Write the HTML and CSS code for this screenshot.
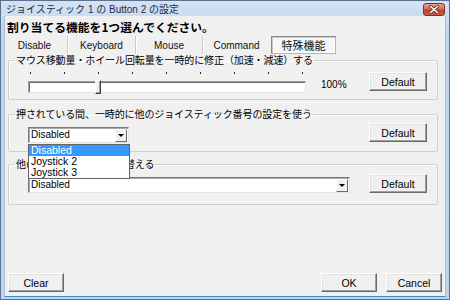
FILE: index.html
```html
<!DOCTYPE html>
<html lang="ja">
<head>
<meta charset="utf-8">
<title>ジョイスティック 1 の Button 2 の設定</title>
<link rel="stylesheet" href="styles.css">
</head>
<body>
<div class="window">
  <div class="titlebar">
    <span class="title">ジョイスティック 1 の Button 2 の設定</span>
    <span class="close"><svg width="12" height="9" viewBox="0 0 12 9"><path d="M2.5 1.5 L9.5 7.5 M9.5 1.5 L2.5 7.5" stroke="#7a2a20" stroke-width="3.2" stroke-linecap="round"/><path d="M2.5 1.5 L9.5 7.5 M9.5 1.5 L2.5 7.5" stroke="#fff" stroke-width="1.6" stroke-linecap="round"/></svg></span>
  </div>
  <div class="client">
    <div class="heading">割り当てる機能を1つ選んでください。</div>
    <div class="tabs">
      <span class="tab t1">Disable</span>
      <span class="tab t2">Keyboard</span>
      <span class="tab t3">Mouse</span>
      <span class="tab t4">Command</span>
      <span class="tab sel">特殊機能</span>
    </div>

    <fieldset class="group g1">
      <legend>マウス移動量・ホイール回転量を一時的に修正（加速・減速）する</legend>
      <div class="row">
        <div class="slider">
          <div class="ticks"><i></i><i></i><i></i><i></i><i></i><i></i><i></i><i></i><i></i></div>
          <div class="track"><span class="thumb"></span></div>
        </div>
        <span class="pct">100%</span>
        <button class="btn">Default</button>
      </div>
    </fieldset>

    <fieldset class="group g2">
      <legend>押されている間、一時的に他のジョイスティック番号の設定を使う</legend>
      <div class="row">
        <div class="combo short">
          <span class="value">Disabled</span>
          <span class="drop"><i></i></span>
          <ul class="list">
            <li class="on">Disabled</li>
            <li>Joystick 2</li>
            <li>Joystick 3</li>
          </ul>
        </div>
        <button class="btn">Default</button>
      </div>
    </fieldset>

    <fieldset class="group g3">
      <legend>他のボタンと設定を入れ替える</legend>
      <div class="row">
        <div class="combo long">
          <span class="value">Disabled</span>
          <span class="drop"><i></i></span>
        </div>
        <button class="btn">Default</button>
      </div>
    </fieldset>

    <div class="footer">
      <button class="btn">Clear</button>
      <span class="spacer"></span>
      <button class="btn">OK</button>
      <button class="btn">Cancel</button>
    </div>
  </div>
</div>
</body>
</html>
```

FILE: styles.css
```css
* { box-sizing: border-box; }
html, body { margin: 0; padding: 0; }
body {
  width: 450px;
  height: 300px;
  overflow: hidden;
  font-family: "Liberation Sans", "Noto Sans CJK JP", sans-serif;
  font-size: 10.5px;
  color: #000;
  background: #fff;
}
.window {
  width: 450px;
  height: 300px;
  border: 1px solid #5b7190;
  background: linear-gradient(#d4e2f4, #c3d6ee 30px, #bfd3ec);
  display: flex;
  flex-direction: column;
}
.titlebar {
  height: 15px;
  flex: none;
  display: flex;
  align-items: flex-start;
  padding-left: 5px;
}
.title {
  flex: 1;
  font-size: 10px;
  line-height: 15px;
  padding-top: 1px;
  color: #1b2c45;
  white-space: nowrap;
}
.close {
  width: 22px;
  height: 13px;
  margin-top: 2px;
  margin-right: 4px;
  border: 1px solid #7b3328;
  border-radius: 3px;
  background: linear-gradient(#e8a596, #d46a57 45%, #c0432f 55%, #cc5a45);
  display: flex;
  align-items: center;
  justify-content: center;
}
.close svg { display: block; }
.client {
  flex: 1;
  margin: 0 3px 2px;
  background: #f0f0f0;
  border-left: 1px solid #a9bed8;
  border-right: 1px solid #a9bed8;
  border-bottom: 1px solid #3a92c2;
  display: flex;
  flex-direction: column;
}
.heading {
  font-family: "Noto Sans CJK JP", sans-serif;
  font-size: 11.8px;
  font-weight: 700;
  line-height: 14px;
  margin-top: 4px;
  padding-left: 2px;
  white-space: nowrap;
}
.tabs {
  display: flex;
  height: 18px;
  margin-top: 2px;
  flex: none;
}
.tab {
  display: flex;
  align-items: center;
  justify-content: center;
  font-size: 10px;
  height: 18px;
  color: #111;
}
.tab.t1 { width: 62px; padding-right: 3px; }
.tab.t2, .tab.t3, .tab.t4 {
  border-left: 1px solid #c9c9c9;
  box-shadow: inset 1px 0 0 #fff;
}
.tab.t2 { width: 68px; }
.tab.t3 { width: 67px; }
.tab.t4 { width: 68px; }
.tab.sel {
  width: 65px;
  height: 18px;
  margin-left: 1px;
  font-family: "Noto Sans CJK JP", sans-serif;
  font-size: 11px;
  border: 1px solid #8a8a8a;
  border-right-color: #b4b4b4;
  border-bottom-color: #b4b4b4;
  box-shadow: inset 1px 1px 0 #c8c8c8, inset -1px -1px 0 #fff;
  background: #f7f7f7;
}
.group {
  margin: 0 7px 0 3px;
  padding: 6px 10px 6px 19px;
  border: 1px solid #cfcfcf;
  border-radius: 2px;
  box-shadow: inset 1px 1px 0 #fff;
  min-width: 0;
}
.group legend {
  font-family: "Noto Sans CJK JP", sans-serif;
  font-size: 10px;
  letter-spacing: -0.1px;
  line-height: 12px;
  padding: 0 1px;
  margin-left: -13px;
  color: #000;
  white-space: nowrap;
}
.g2 { margin-top: 8px; padding-top: 3px; padding-bottom: 8px; }
.g3 { margin-top: 6px; padding-top: 4px; padding-bottom: 11px; }
.row {
  display: flex;
  align-items: flex-start;
}
.btn {
  width: 58px;
  height: 19px;
  margin: 0 0 0 auto;
  padding: 0;
  font-family: "Liberation Sans", sans-serif;
  font-size: 10.5px;
  color: #000;
  background: #f0f0f0;
  border: 1px solid;
  border-color: #fff #696969 #696969 #fff;
  box-shadow: inset -1px -1px 0 #a0a0a0, inset 1px 1px 0 #e3e3e3;
  border-radius: 0;
}
.slider {
  width: 278px;
  display: flex;
  flex-direction: column;
}
.ticks {
  height: 2px;
  margin: 0 3px 0 2px;
  display: flex;
  justify-content: space-between;
}
.ticks i {
  width: 1px;
  height: 2px;
  background: #222;
}
.track {
  margin-top: 7px;
  height: 12px;
  background: #fff;
  border: 1px solid;
  border-color: #a0a0a0 #e3e3e3 #e3e3e3 #a0a0a0;
  box-shadow: inset 1px 1px 0 #696969;
  position: relative;
}
.thumb {
  position: absolute;
  left: 66px;
  top: -2px;
  width: 6px;
  height: 14px;
  background: #f0f0f0;
  border: 1px solid;
  border-color: #fff #404040 #404040 #fff;
  box-shadow: inset -1px -1px 0 #a0a0a0;
}
.pct {
  margin-left: 15px;
  margin-top: 7px;
  line-height: 12px;
  font-size: 10px;
}
.combo {
  position: relative;
  height: 16px;
  margin-top: 4px;
  background: #fff;
  border: 1px solid;
  border-color: #7a7a7a #e3e3e3 #e3e3e3 #7a7a7a;
  box-shadow: inset 1px 1px 0 #a8a8a8;
  display: flex;
  align-items: center;
}
.combo.short { width: 101px; }
.combo.long { width: 322px; margin-top: 3px; }
.combo .value {
  flex: 1;
  padding-left: 2px;
  font-size: 10px;
  line-height: 14px;
}
.drop {
  width: 12px;
  height: 13px;
  margin-right: 1px;
  background: #f0f0f0;
  border: 1px solid;
  border-color: #fff #696969 #696969 #fff;
  display: flex;
  align-items: center;
  justify-content: center;
}
.drop i {
  width: 0;
  height: 0;
  border-left: 3px solid transparent;
  border-right: 3px solid transparent;
  border-top: 3px solid #000;
  margin-top: 1px;
}
.list {
  position: absolute;
  left: -1px;
  top: 16px;
  width: 102px;
  margin: 0;
  padding: 0;
  list-style: none;
  background: #fff;
  border: 1px solid #646464;
  z-index: 5;
}
.list li {
  height: 11px;
  line-height: 11px;
  padding-left: 2px;
  font-size: 10.5px;
}
.list li.on {
  background: #3399ff;
  color: #fff;
}
.footer {
  margin-top: auto;
  display: flex;
  padding: 0 3px 4px 3px;
}
.footer .btn { width: 56px; margin: 0; }
.footer .spacer { flex: 1; }
.footer .btn + .btn { margin-left: 9px; }
```
